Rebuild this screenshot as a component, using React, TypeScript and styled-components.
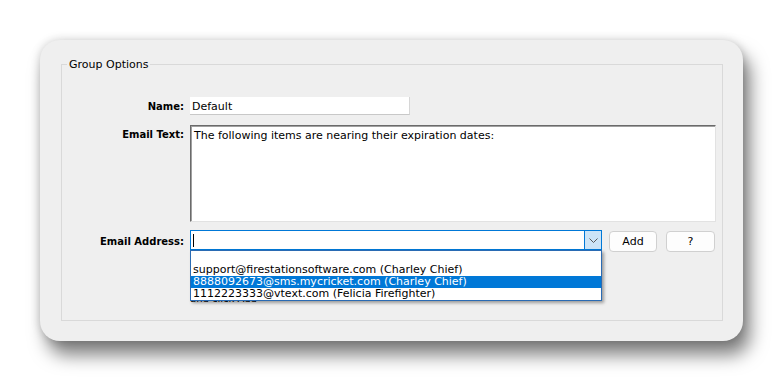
import { createGlobalStyle } from "styled-components";
import styled from "styled-components";

const GlobalStyle = createGlobalStyle`
  html, body {
    margin: 0;
    padding: 0;
    background: #ffffff;
  }
  body {
    font-family: "DejaVu Sans", sans-serif;
    font-size: 11px;
    color: #000;
  }
`;

const emails = [
  { text: "", selected: false },
  { text: "support@firestationsoftware.com (Charley Chief)", selected: false },
  { text: "8888092673@sms.mycricket.com (Charley Chief)", selected: true },
  { text: "1112223333@vtext.com (Felicia Firefighter)", selected: false },
];

const App = () => {
  return (
    <Page>
      <GlobalStyle />
      <Window>
        <Group>
          <Legend>Group Options</Legend>
          <Form>
            <Label>Name:</Label>
            <NameInput>Default</NameInput>

            <Label>Email Text:</Label>
            <TextArea>The following items are nearing their expiration dates:</TextArea>

            <Label>Email Address:</Label>
            <AddressRow>
              <ComboWrap>
                <Combo>
                  <ComboField>
                    <Caret />
                  </ComboField>
                  <DropButton>
                    <svg width="9" height="5" viewBox="0 0 9 5">
                      <path d="M0.5 0.5 L4.5 4.5 L8.5 0.5" fill="none" stroke="#5a5a5a" strokeWidth="1" />
                    </svg>
                  </DropButton>
                </Combo>
                <Hint>
                  Select an address from the list or type a new one
                  <br />
                  and click Add
                </Hint>
                <DropList>
                  {emails.map((e, i) => (
                    <DropItem key={i} $selected={e.selected}>
                      {e.text}
                    </DropItem>
                  ))}
                </DropList>
              </ComboWrap>
              <Button>Add</Button>
              <Button $wide>?</Button>
            </AddressRow>
          </Form>
        </Group>
      </Window>
    </Page>
  );
};

export default App;

const Page = styled.div`
  width: 783px;
  height: 381px;
  padding: 40px 0 0 40px;
  box-sizing: border-box;
`;

const Window = styled.div`
  width: 703px;
  height: 301px;
  box-sizing: border-box;
  border-radius: 20px;
  background: #efefef;
  padding: 18px 20px 20px 21px;
  box-shadow: 0 0 10px rgba(0, 0, 0, 0.18), 7px 14px 18px rgba(0, 0, 0, 0.5);
`;

const Group = styled.fieldset`
  margin: 0;
  height: 263px;
  box-sizing: border-box;
  border: 1px solid #d9d9d9;
  padding: 0 6px 0 0;
`;

const Legend = styled.legend`
  margin-left: 5px;
  padding: 0 2px;
  color: #000;
  font-size: 11px;
`;

const Form = styled.div`
  display: grid;
  grid-template-columns: 117px 1fr;
  column-gap: 6px;
  row-gap: 10px;
  padding: 26px 0 0 5px;
  align-items: start;
`;

const Label = styled.div`
  font-weight: bold;
  font-size: 10px;
  text-align: right;
  padding-top: 4px;
  white-space: nowrap;
`;

const NameInput = styled.div`
  width: 220px;
  height: 18px;
  box-sizing: border-box;
  background: #ffffff;
  border-right: 1px solid #d6d6d6;
  border-bottom: 1px solid #c8c8c8;
  padding: 3px 2px 0;
  line-height: 13px;
`;

const TextArea = styled.div`
  height: 97px;
  box-sizing: border-box;
  background: #ffffff;
  border-top: 1px solid #6a6a6a;
  border-left: 1px solid #6a6a6a;
  border-right: 1px solid #e2e2e2;
  border-bottom: 1px solid #e2e2e2;
  box-shadow: inset 1px 1px 0 #a0a0a0;
  padding: 3px 3px 0;
  line-height: 13px;
`;

const AddressRow = styled.div`
  display: flex;
  align-items: flex-start;
  margin-top: -2px;
`;

const ComboWrap = styled.div`
  position: relative;
  width: 412px;
  margin-right: 7px;
`;

const Combo = styled.div`
  display: flex;
  height: 20px;
  box-sizing: border-box;
  border: 1px solid #0078d7;
  background: #ffffff;
`;

const ComboField = styled.div`
  flex: 1;
  display: flex;
  align-items: center;
  padding-left: 2px;
`;

const Caret = styled.span`
  display: block;
  width: 1px;
  height: 13px;
  background: #000;
`;

const DropButton = styled.div`
  width: 16px;
  display: flex;
  align-items: center;
  justify-content: center;
  background: #cce4f7;
  border-left: 1px solid #0078d7;
`;

const Hint = styled.div`
  padding-top: 29px;
  line-height: 13px;
  font-size: 10px;
`;

const DropList = styled.div`
  position: absolute;
  left: 0;
  top: 20px;
  width: 412px;
  box-sizing: border-box;
  border: 1px solid #2a6bb3;
  background: #ffffff;
  box-shadow: 2px 2px 3px rgba(0, 0, 0, 0.35);
  font-size: 11px;
`;

const DropItem = styled.div<{ $selected: boolean }>`
  height: 12px;
  line-height: 12px;
  padding-left: 2px;
  white-space: nowrap;
  background: ${({ $selected }) => ($selected ? "#0078d7" : "#ffffff")};
  color: ${({ $selected }) => ($selected ? "#ffffff" : "#000000")};
  &:first-child {
    height: 13px;
  }
`;

const Button = styled.div<{ $wide?: boolean }>`
  width: ${({ $wide }) => ($wide ? "49px" : "48px")};
  height: 21px;
  margin-top: 1px;
  margin-left: ${({ $wide }) => ($wide ? "9px" : "0")};
  box-sizing: border-box;
  border: 1px solid #d0d0d0;
  border-radius: 4px;
  background: #fdfdfd;
  display: flex;
  align-items: center;
  justify-content: center;
`;
